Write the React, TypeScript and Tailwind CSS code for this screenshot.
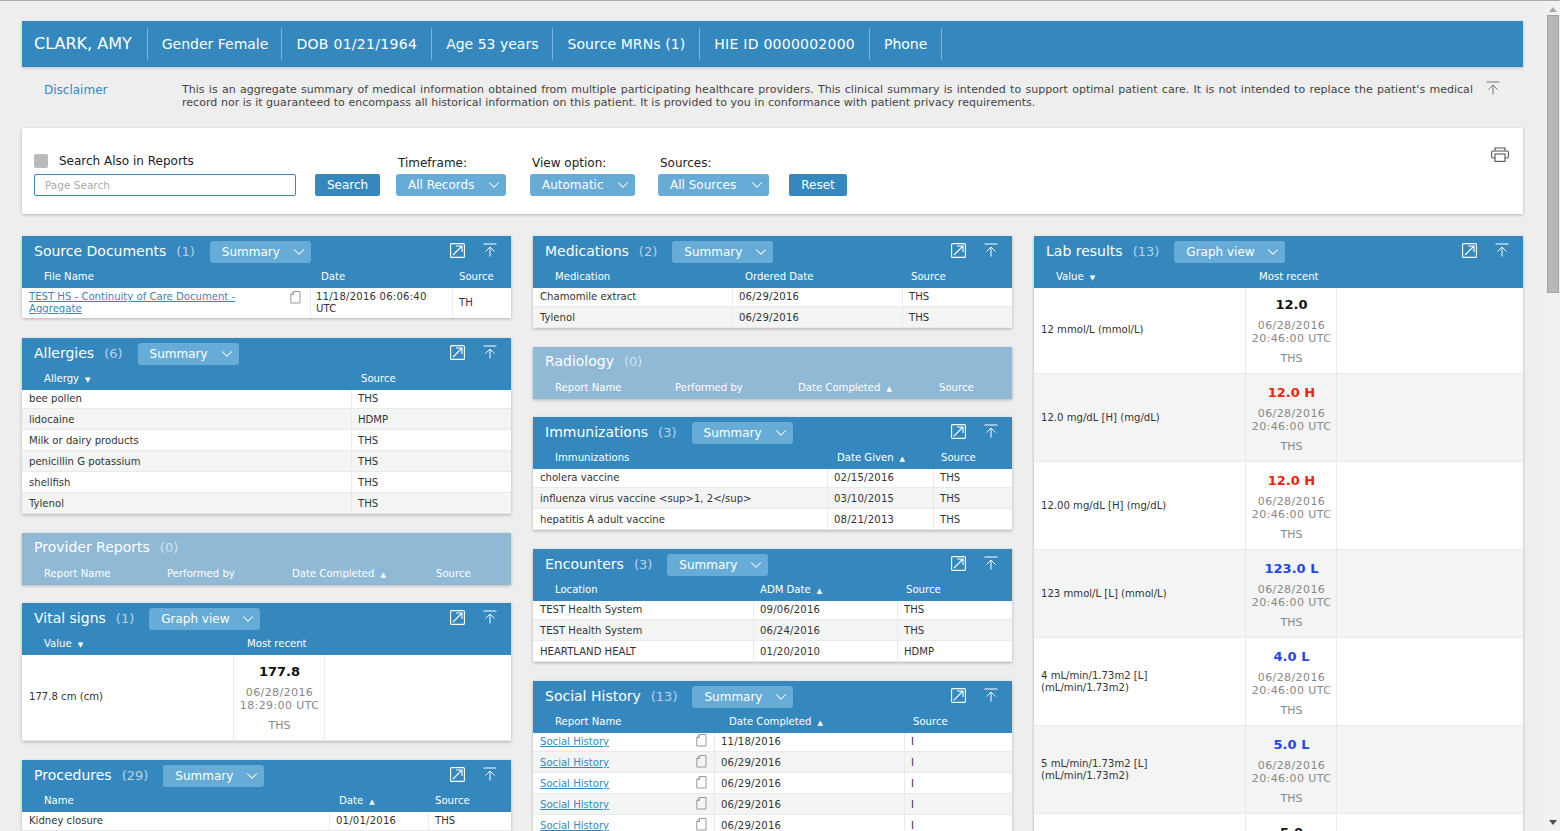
import { ChevronDown } from "lucide-react";
import type { ReactNode } from "react";

const patientFields = [
  { text: "Gender Female", className: "pl-[14px] pr-[13px]" },
  { text: "DOB 01/21/1964", className: "px-[14px] tracking-[0.3px]" },
  { text: "Age 53 years", className: "px-[14px]" },
  { text: "Source MRNs (1)", className: "px-[14px] tracking-[0.1px]" },
  { text: "HIE ID 0000002000", className: "px-[14px] tracking-[0.25px]" },
  { text: "Phone", className: "px-[14px]" },
];

function OpenIcon() {
  return (
    <svg width="15" height="15" viewBox="0 0 15 15" fill="none" stroke="white" strokeWidth="1.1">
      <rect x="0.6" y="0.6" width="13.8" height="13.8" rx="1" />
      <path d="M3 12 L12 3 M6 3 H12 V9" />
    </svg>
  );
}

function CollapseIcon({ color = "white" }: { color?: string }) {
  return (
    <svg width="14" height="14" viewBox="0 0 14 14" fill="none" stroke={color} strokeWidth="1">
      <path d="M0.5 1 H13.5 M7 13.5 V4 M2.5 8.5 L7 4 L11.5 8.5" />
    </svg>
  );
}

function DocIcon() {
  return (
    <svg width="11" height="13" viewBox="0 0 11 13" fill="none" stroke="#999" strokeWidth="1" className="shrink-0">
      <path d="M3.5 0.5 H10 V12 H0.8 V3.5 Z M3.5 0.5 V3.5 H0.8" />
    </svg>
  );
}

function PrintIcon() {
  return (
    <svg width="18" height="15" viewBox="0 0 18 15" fill="none" stroke="#555" strokeWidth="1.1">
      <path d="M4 4 V1 H14 V4 M4 11 H1.8 Q0.6 11 0.6 9.8 V5.2 Q0.6 4 1.8 4 H16.2 Q17.4 4 17.4 5.2 V9.8 Q17.4 11 16.2 11 H14" />
      <rect x="4" y="7" width="10" height="7.4" />
    </svg>
  );
}

function Select({ label, className }: { label: string; className: string }) {
  return (
    <div className={`flex h-[22px] items-center justify-between rounded-[3px] bg-[#66acd6] pl-3 pr-[3px] text-[12px] text-white ${className}`}>
      <span>{label}</span>
      <ChevronDown size={18} strokeWidth={1.4} />
    </div>
  );
}

type Header = { label: string; sort?: "up" | "down"; className: string };

function ColumnHeaders({ headers }: { headers: Header[] }) {
  return (
    <div className="flex h-[22px] items-start pt-[4px] text-[10.1px] leading-[14px]">
      {headers.map((h) => (
        <div key={h.label} className={`shrink-0 whitespace-nowrap ${h.className}`}>
          {h.label}
          {h.sort === "up" && <span className="ml-[6px] text-[7px]">▲</span>}
          {h.sort === "down" && <span className="ml-[6px] text-[7px]">▼</span>}
        </div>
      ))}
    </div>
  );
}

function Panel({
  title,
  count,
  view,
  viewClass,
  headers,
  empty,
  className,
  children,
}: {
  title: string;
  count: number;
  view?: string;
  viewClass?: string;
  headers: Header[];
  empty?: boolean;
  className?: string;
  children?: ReactNode;
}) {
  return (
    <section className={`shrink-0 shadow-[0_1px_3px_rgba(0,0,0,0.25)] ${className ?? ""}`}>
      <div className={`text-white ${empty ? "bg-[#90b9d6] text-[#e4eff6]" : "bg-[#3588be]"}`}>
        <div className={`flex h-[30px] items-center pl-3 pr-[14px] ${empty ? "" : "pt-[2px]"}`}>
          <span className="mb-[2px] text-[14px]">{title}</span>
          <span className={`ml-[10px] text-[13px] ${empty ? "text-[#cfe1ee]" : "text-[#b5d3e8]"}`}>({count})</span>
          {view && <Select label={view} className={`ml-[15px] ${viewClass}`} />}
          {!empty && (
            <div className="ml-auto flex items-center gap-[18px] pb-[4px]">
              <OpenIcon />
              <CollapseIcon />
            </div>
          )}
        </div>
        <ColumnHeaders headers={headers} />
      </div>
      {children}
    </section>
  );
}

function SimpleRows({ rows, cols }: { rows: string[][]; cols: string[] }) {
  return (
    <div className="text-[10.1px] text-[#333]">
      {rows.map((row, i) => (
        <div
          key={i}
          className={`flex border-b border-[#e9eaea] ${i === 0 ? "h-[19px]" : "h-[21px]"} ${i % 2 ? "bg-[#f3f5f5]" : "bg-white"}`}
        >
          {row.map((c, j) => (
            <div
              key={j}
              className={`shrink-0 truncate leading-[16px] ${i === 0 ? "pt-[1px]" : "pt-[3px]"} ${j > 0 ? "border-l border-[#e9eaea] pl-[6px]" : "pl-[7px]"} ${/^\d\d\//.test(c) ? "tracking-[0.2px]" : ""} ${cols[j]}`}
            >
              {c}
            </div>
          ))}
        </div>
      ))}
    </div>
  );
}

function SocialRows() {
  const dates = ["11/18/2016", "06/29/2016", "06/29/2016", "06/29/2016", "06/29/2016"];
  return (
    <div className="text-[10.1px] text-[#333]">
      {dates.map((d, i) => {
        const pad = i === 0 ? "pt-[1px]" : "pt-[3px]";
        return (
          <div
            key={i}
            className={`flex border-b border-[#e9eaea] ${i === 0 ? "h-[19px]" : "h-[21px]"} ${i % 2 ? "bg-[#f3f5f5]" : "bg-white"}`}
          >
            <div className={`flex w-[181px] shrink-0 items-start justify-between pl-[7px] pr-[7px] leading-[16px] ${pad}`}>
              <a className="text-[#3588be] underline">Social History</a>
              <DocIcon />
            </div>
            <div className={`w-[190px] shrink-0 border-l border-[#e9eaea] pl-[6px] leading-[16px] tracking-[0.2px] ${pad}`}>{d}</div>
            <div className={`border-l border-[#e9eaea] pl-[6px] leading-[16px] ${pad}`}>I</div>
          </div>
        );
      })}
    </div>
  );
}

type Reading = { label: ReactNode; value: string; date: string; tone: string };

function GraphRow({ r, alt, first }: { r: Reading; alt: boolean; first: boolean }) {
  return (
    <div className={`flex shrink-0 border-b border-[#e9eaea] ${first ? "h-[86px]" : "h-[88px]"} ${alt ? "bg-[#f3f5f5]" : "bg-white"}`}>
      <div className={`flex w-[211px] shrink-0 items-center pl-[7px] pr-2 text-[10.1px] leading-[12px] text-[#333] ${first ? "pb-[2px]" : ""}`}>{r.label}</div>
      <div className={`flex w-[92px] shrink-0 flex-col items-center border-x border-[#e9eaea] pl-[1px] text-center ${first ? "pt-[8px]" : "pt-[10px]"}`}>
        <div className={`text-[13px] font-bold leading-[18px] ${r.tone}`}>{r.value}</div>
        <div className="mt-[5px] whitespace-nowrap text-[11px] leading-[13px] tracking-[0.4px] text-[#888]">
          {r.date.split("|").map((line) => (
            <div key={line}>{line}</div>
          ))}
        </div>
        <div className="mt-[7px] text-[11px] leading-[13px] text-[#888]">THS</div>
      </div>
    </div>
  );
}

const labResults: Reading[] = [
  { label: "12 mmol/L (mmol/L)", value: "12.0", date: "06/28/2016|20:46:00 UTC", tone: "text-[#111]" },
  { label: "12.0 mg/dL [H] (mg/dL)", value: "12.0 H", date: "06/28/2016|20:46:00 UTC", tone: "text-[#f5200f]" },
  { label: "12.00 mg/dL [H] (mg/dL)", value: "12.0 H", date: "06/28/2016|20:46:00 UTC", tone: "text-[#f5200f]" },
  { label: "123 mmol/L [L] (mmol/L)", value: "123.0 L", date: "06/28/2016|20:46:00 UTC", tone: "text-[#2445f0]" },
  { label: "4 mL/min/1.73m2 [L] (mL/min/1.73m2)", value: "4.0 L", date: "06/28/2016|20:46:00 UTC", tone: "text-[#2445f0]" },
  { label: "5 mL/min/1.73m2 [L] (mL/min/1.73m2)", value: "5.0 L", date: "06/28/2016|20:46:00 UTC", tone: "text-[#2445f0]" },
  { label: "5 mL/min/1.73m2 [L] (mL/min/1.73m2)", value: "5.0", date: "06/28/2016|20:46:00 UTC", tone: "text-[#111]" },
];

export default function App() {
  return (
    <div className="flex h-[831px] overflow-hidden border-t border-[#aaa] bg-[#eeeeee] font-['DejaVu_Sans',sans-serif]">
      <main className="w-[1544px] shrink-0 pl-[22px] pr-[21px] pt-[20px]">
        {/* patient banner */}
        <header className="flex h-[46px] items-center bg-[#3588be] text-white shadow-[0_1px_3px_rgba(0,0,0,0.2)]">
          <div className="flex h-[32px] items-center border-r border-[#7fb5d8] pl-3 pr-[15px] text-[16px]">CLARK, AMY</div>
          {patientFields.map((f) => (
            <div key={f.text} className={`flex h-[32px] items-center border-r border-[#7fb5d8] text-[14px] ${f.className}`}>
              {f.text}
            </div>
          ))}
        </header>

        {/* disclaimer */}
        <div className="flex h-[61px] items-start pl-[22px] pt-[16px]">
          <a className="w-[138px] shrink-0 text-[12px] leading-[14px] text-[#3588be]">Disclaimer</a>
          <p className="w-[1291px] shrink-0 text-justify text-[11px] leading-[13px] tracking-[0.035px] text-[#444]">
            This is an aggregate summary of medical information obtained from multiple participating healthcare providers. This clinical summary is intended to support optimal patient care. It is not intended to replace the patient's medical record nor is it guaranteed to encompass all historical information on this patient. It is provided to you in conformance with patient privacy requirements.
          </p>
          <div className="ml-[13px] mt-[-2px]">
            <CollapseIcon color="#777" />
          </div>
        </div>

        {/* search */}
        <div className="relative flex h-[86px] items-end bg-white pb-[18px] pl-3 shadow-[0_1px_3px_rgba(0,0,0,0.25)]">
          <div className="w-[262px] shrink-0">
            <label className="mb-[5px] flex items-center text-[12px] leading-[15px] text-[#222]">
              <span className="mr-[11px] mt-[-2px] h-[14px] w-[14px] rounded-[2px] bg-[#bbbbbb]" />
              Search Also in Reports
            </label>
            <input
              readOnly
              placeholder="Page Search"
              className="block h-[22px] w-full rounded-[2px] border border-[#3588be] bg-white px-[10px] text-[10.5px] placeholder:text-[#aaa]"
            />
          </div>
          <button className="ml-[19px] h-[22px] w-[65px] rounded-[2px] bg-[#3588be] text-[12px] text-white">Search</button>
          <div className="ml-[16px] w-[110px] shrink-0">
            <div className="mb-[3px] pl-[2px] text-[12px] leading-[15px] text-[#222]">Timeframe:</div>
            <Select label="All Records" className="w-[110px]" />
          </div>
          <div className="ml-[24px] w-[105px] shrink-0">
            <div className="mb-[3px] pl-[2px] text-[12px] leading-[15px] text-[#222]">View option:</div>
            <Select label="Automatic" className="w-[105px]" />
          </div>
          <div className="ml-[23px] w-[111px] shrink-0">
            <div className="mb-[3px] pl-[2px] text-[12px] leading-[15px] text-[#222]">Sources:</div>
            <Select label="All Sources" className="w-[111px]" />
          </div>
          <button className="ml-[20px] h-[22px] w-[58px] rounded-[2px] bg-[#3588be] text-[12px] text-white">Reset</button>
          <div className="absolute right-[14px] top-[19px]">
            <PrintIcon />
          </div>
        </div>

        {/* panel columns */}
        <div className="mt-[22px] flex items-start gap-[22px]">
          <div className="flex w-[489px] shrink-0 flex-col">
            <Panel
              title="Source Documents"
              count={1}
              view="Summary"
              viewClass="w-[101px]"
              headers={[
                { label: "File Name", className: "w-[299px] pl-[22px]" },
                { label: "Date", className: "w-[138px] pl-0" },
                { label: "Source", className: "" },
              ]}
            >
              <div className="flex h-[30px] bg-white text-[10.1px] leading-[12px] text-[#333]">
                <div className="flex w-[288px] shrink-0 justify-between pl-[7px] pr-[9px] pt-[3px]">
                  <a className="w-[240px] text-[#3588be] underline">TEST HS - Continuity of Care Document - Aggregate</a>
                  <DocIcon />
                </div>
                <div className="w-[142px] shrink-0 border-l border-[#e9eaea] pl-[5px] pr-[10px] pt-[3px] tracking-[0.2px]">11/18/2016 06:06:40 UTC</div>
                <div className="flex items-center border-l border-[#e9eaea] pl-[6px]">TH</div>
              </div>
            </Panel>

            <Panel
              title="Allergies"
              count={6}
              view="Summary"
              viewClass="w-[101px]"
              className="mt-[20px]"
              headers={[
                { label: "Allergy", sort: "down", className: "w-[339px] pl-[22px]" },
                { label: "Source", className: "" },
              ]}
            >
              <SimpleRows
                cols={["w-[329px]", "w-[160px]"]}
                rows={[
                  ["bee pollen", "THS"],
                  ["lidocaine", "HDMP"],
                  ["Milk or dairy products", "THS"],
                  ["penicillin G potassium", "THS"],
                  ["shellfish", "THS"],
                  ["Tylenol", "THS"],
                ]}
              />
            </Panel>

            <Panel
              title="Provider Reports"
              count={0}
              empty
              className="mt-[19px]"
              headers={[
                { label: "Report Name", className: "w-[145px] pl-[22px]" },
                { label: "Performed by", className: "w-[125px]" },
                { label: "Date Completed", sort: "up", className: "w-[144px]" },
                { label: "Source", className: "" },
              ]}
            />

            <Panel
              title="Vital signs"
              count={1}
              view="Graph view"
              viewClass="w-[111px]"
              className="mt-[18px]"
              headers={[
                { label: "Value", sort: "down", className: "w-[225px] pl-[22px]" },
                { label: "Most recent", className: "" },
              ]}
            >
              <GraphRow
                alt={false}
                first
                r={{ label: "177.8 cm (cm)", value: "177.8", date: "06/28/2016|18:29:00 UTC", tone: "text-[#111]" }}
              />
            </Panel>

            <Panel
              title="Procedures"
              count={29}
              view="Summary"
              viewClass="w-[101px]"
              className="mt-[19px]"
              headers={[
                { label: "Name", className: "w-[317px] pl-[22px]" },
                { label: "Date", sort: "up", className: "w-[96px]" },
                { label: "Source", className: "" },
              ]}
            >
              <SimpleRows cols={["w-[307px]", "w-[99px]", "w-[83px]"]} rows={[["Kidney closure", "01/01/2016", "THS"]]} />
            </Panel>
          </div>

          <div className="flex w-[479px] shrink-0 flex-col">
            <Panel
              title="Medications"
              count={2}
              view="Summary"
              viewClass="w-[101px]"
              headers={[
                { label: "Medication", className: "w-[212px] pl-[22px]" },
                { label: "Ordered Date", className: "w-[166px]" },
                { label: "Source", className: "" },
              ]}
            >
              <SimpleRows
                cols={["w-[199px]", "w-[170px]", "w-[110px]"]}
                rows={[
                  ["Chamomile extract", "06/29/2016", "THS"],
                  ["Tylenol", "06/29/2016", "THS"],
                ]}
              />
            </Panel>

            <Panel
              title="Radiology"
              count={0}
              empty
              className="mt-[19px]"
              headers={[
                { label: "Report Name", className: "w-[142px] pl-[22px]" },
                { label: "Performed by", className: "w-[123px]" },
                { label: "Date Completed", sort: "up", className: "w-[141px]" },
                { label: "Source", className: "" },
              ]}
            />

            <Panel
              title="Immunizations"
              count={3}
              view="Summary"
              viewClass="w-[101px]"
              className="mt-[18px]"
              headers={[
                { label: "Immunizations", className: "w-[304px] pl-[22px]" },
                { label: "Date Given", sort: "up", className: "w-[104px]" },
                { label: "Source", className: "" },
              ]}
            >
              <SimpleRows
                cols={["w-[294px]", "w-[106px]", "w-[79px]"]}
                rows={[
                  ["cholera vaccine", "02/15/2016", "THS"],
                  ["influenza virus vaccine <sup>1, 2</sup>", "03/10/2015", "THS"],
                  ["hepatitis A adult vaccine", "08/21/2013", "THS"],
                ]}
              />
            </Panel>

            <Panel
              title="Encounters"
              count={3}
              view="Summary"
              viewClass="w-[101px]"
              className="mt-[19px]"
              headers={[
                { label: "Location", className: "w-[227px] pl-[22px]" },
                { label: "ADM Date", sort: "up", className: "w-[146px]" },
                { label: "Source", className: "" },
              ]}
            >
              <SimpleRows
                cols={["w-[220px]", "w-[144px]", "w-[115px]"]}
                rows={[
                  ["TEST Health System", "09/06/2016", "THS"],
                  ["TEST Health System", "06/24/2016", "THS"],
                  ["HEARTLAND HEALT", "01/20/2010", "HDMP"],
                ]}
              />
            </Panel>

            <Panel
              title="Social History"
              count={13}
              view="Summary"
              viewClass="w-[101px]"
              className="mt-[19px]"
              headers={[
                { label: "Report Name", className: "w-[196px] pl-[22px]" },
                { label: "Date Completed", sort: "up", className: "w-[184px]" },
                { label: "Source", className: "" },
              ]}
            >
              <SocialRows />
            </Panel>
          </div>

          <div className="flex w-[489px] shrink-0 flex-col">
            <Panel
              title="Lab results"
              count={13}
              view="Graph view"
              viewClass="w-[111px]"
              headers={[
                { label: "Value", sort: "down", className: "w-[225px] pl-[22px]" },
                { label: "Most recent", className: "" },
              ]}
            >
              {labResults.map((r, i) => (
                <GraphRow key={i} r={r} alt={i % 2 === 1} first={i === 0} />
              ))}
            </Panel>
          </div>
        </div>
      </main>

      {/* page scrollbar */}
      <div className="relative flex w-[16px] shrink-0 flex-col items-center bg-[#f1f1f1] pl-[1px]">
        <div className="mt-[6px] h-0 w-0 border-x-[4px] border-b-[5px] border-x-transparent border-b-[#a8a8a8]" />
        <div className="mt-[3px] h-[278px] w-[12px] border border-[#a3a3a3] bg-[#b8b8b8]" />
        <div className="mt-auto mb-[6px] h-0 w-0 border-x-[4px] border-t-[5px] border-x-transparent border-t-[#505050]" />
      </div>
    </div>
  );
}
